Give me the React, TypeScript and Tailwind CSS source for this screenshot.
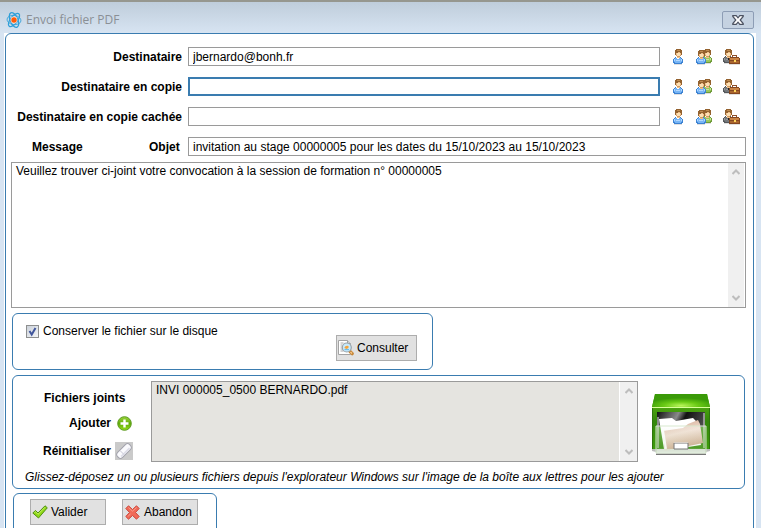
import clsx from "clsx";

interface IconProps {
  className?: string;
}

const AtomIcon: React.FC<IconProps> = ({ className }) => (
  <svg viewBox="0 0 16 16" className={className} fill="none">
    <g stroke="#2f9fd8" strokeWidth="1.3">
      <ellipse cx="8" cy="8" rx="7.8" ry="3.8" transform="rotate(66 8 8)" />
      <ellipse cx="8" cy="8" rx="7.8" ry="3.6" transform="rotate(-52 8 8)" />
      <ellipse cx="8" cy="8" rx="7" ry="4.6" transform="rotate(8 8 8)" strokeWidth="0.8" />
    </g>
    <circle cx="8" cy="8" r="3.4" fill="#fbe3d6" />
    <circle cx="8" cy="8" r="2.7" fill="#ff5a0a" />
  </svg>
);

const Head: React.FC<{ x: number; y: number }> = ({ x, y }) => (
  <g transform={`translate(${x} ${y})`}>
    <path d="M1 2h5v5H5v2H2V7H1z" fill="#f0c08a" />
    <path d="M2 4h3v3H2z" fill="#fde0b4" />
    <path d="M1 0h5v1h1v5H6V4H5V3H3v1H1v2H0V1h1z" fill="#94622f" />
    <path d="M2 1h3v1H2z" fill="#c08c50" />
    <path d="M1 6h1v1H1zM5 6h1v1H5zM2 7h3v1H2z" fill="#d09a62" />
  </g>
);

interface BodyProps {
  x: number;
  y: number;
  edge: string;
  fill: string;
  light: string;
}

const Body: React.FC<BodyProps> = ({ x, y, edge, fill, light }) => (
  <g transform={`translate(${x} ${y})`}>
    <path d="M2 0h6v1h1v1h1v4H9v1H1V6H0V2h1V1h1z" fill={edge} />
    <path d="M2 1h6v1h1v3H8v1H2V5H1V2h1z" fill={fill} />
    <path d="M1 2h1v2H1zM8 2h1v2H8zM3 3h4v1H3z" fill={light} />
    <path d="M3 0h4v1H6v1H4V1H3z" fill="#fff" />
    <path d="M1 7h8v1H1z" fill="#000" opacity="0.12" />
  </g>
);

const UserIcon: React.FC<IconProps> = ({ className }) => (
  <svg viewBox="0 0 12 16" className={className} shapeRendering="crispEdges">
    <Body x={1} y={8} edge="#3c82d2" fill="#78b5f5" light="#b3d9ff" />
    <Head x={3} y={0} />
  </svg>
);

const UsersIcon: React.FC<IconProps> = ({ className }) => (
  <svg viewBox="0 0 17 16" className={className} shapeRendering="crispEdges">
    <Body x={6} y={7} edge="#6f9c38" fill="#9cc75c" light="#cbe79a" />
    <Head x={8} y={0} />
    <Body x={0} y={8} edge="#3c82d2" fill="#78b5f5" light="#b3d9ff" />
    <Head x={2} y={1} />
  </svg>
);

const ContactIcon: React.FC<IconProps> = ({ className }) => (
  <svg viewBox="0 0 17 16" className={className} shapeRendering="crispEdges">
    <Body x={0} y={7} edge="#55585b" fill="#75787b" light="#96999c" />
    <path d="M5 8h1v3H5z" fill="#222" />
    <Head x={2} y={0} />
    <path d="M9 8V6h5v2h-1V7h-3v1z" fill="#8f5029" />
    <path d="M7 8h9v1h1v6H6V9h1z" fill="#84461f" />
    <path d="M7 9h9v2H7z" fill="#c98344" />
    <path d="M7 12h9v2H7z" fill="#a9652f" />
    <path d="M11 11h2v2h-2z" fill="#ffd65c" />
    <path d="M6 15h11v1H6z" fill="#000" opacity="0.12" />
  </svg>
);

const PreviewIcon: React.FC<IconProps> = ({ className }) => (
  <svg viewBox="0 0 16 16" className={className}>
    <path d="M.5.5h9l3 3v11H.5z" fill="#fff" stroke="#a3a3a3" />
    <path d="M9.500.5v3h3" fill="#ddd" stroke="#a3a3a3" />
    <path d="M2.500 3h3M2.500 5h2M2.500 7h2M2.500 9h2M2.500 11h3" stroke="#aaa" />
    <path d="m12 11.500 2.200 2.200" stroke="#c58434" strokeWidth="3.200" strokeLinecap="round" />
    <path d="m12.500 12 1.500 1.500" stroke="#f8c98a" strokeWidth="1.400" />
    <circle cx="8.800" cy="7.500" r="4.500" fill="#c6eafc" stroke="#98a1a8" strokeWidth="1.200" />
    <path d="M6.300 8q1-3 4.200-2v2l-2 1z" fill="#f5a33a" />
    <path d="M6.500 9h4.500v1.200H6.500z" fill="#6cbfee" />
  </svg>
);

const AddIcon: React.FC<IconProps> = ({ className }) => (
  <svg viewBox="0 0 15 15" className={className}>
    <defs>
      <linearGradient id="add" x2="0" y2="1">
        <stop stopColor="#9bd43a" />
        <stop offset="0.5" stopColor="#62ad08" />
        <stop offset="1" stopColor="#93dc1b" />
      </linearGradient>
    </defs>
    <circle cx="7.500" cy="7.500" r="6.800" fill="url(#add)" stroke="#5c9a22" />
    <path d="M7.500 3.500v8M3.500 7.500h8" stroke="#fff" strokeWidth="2.400" />
  </svg>
);

const EraserIcon: React.FC<IconProps> = ({ className }) => (
  <svg viewBox="0 0 18 18" className={className}>
    <g transform="rotate(-45 9 9)">
      <rect x="0.500" y="5.500" width="17" height="7" rx="3" fill="#fafafd" stroke="#a3a3ad" />
      <path d="M3 10.800h12" stroke="#dcdce8" strokeWidth="1.600" />
      <path d="M6.500 6v6" stroke="#d3d3df" />
    </g>
  </svg>
);

const CheckIcon: React.FC<IconProps> = ({ className }) => (
  <svg viewBox="0 0 16 14" className={className}>
    <path
      d="m.8 8 2.700-2.500L6 8l7-7.200 2.300 2L6.500 13z"
      fill="#8fd816"
      stroke="#4f8f14"
      strokeLinejoin="round"
    />
    <path d="m2.500 7.500 1-.8L6 9.300l7-7" fill="none" stroke="#c5f16a" />
  </svg>
);

const CrossIcon: React.FC<IconProps> = ({ className }) => (
  <svg viewBox="0 0 15 15" className={className}>
    <path
      d="M3.500.8 7.500 4.500l4-3.700 2.700 2.700-3.700 4 3.700 4-2.700 2.700-4-3.700-4 3.700L.8 11.500l3.700-4-3.700-4z"
      fill="#f06a58"
      stroke="#cc4a3e"
      strokeLinejoin="round"
    />
    <path d="m3.500 2.500 4 3.700 4-3.700M3 11.500l2.500-2.800" fill="none" stroke="#fa9d8a" />
  </svg>
);

const MailboxIcon: React.FC<IconProps> = ({ className }) => (
  <svg viewBox="0 0 60 64" className={className}>
    <defs>
      <radialGradient id="lid" cx="0.5" cy="0.9" r="0.6">
        <stop stopColor="#b9f55b" />
        <stop offset="0.5" stopColor="#69c914" />
        <stop offset="1" stopColor="#3a9a08" />
      </radialGradient>
      <linearGradient id="body" x2="0" y2="1">
        <stop stopColor="#62bd14" />
        <stop offset="0.5" stopColor="#34870b" />
        <stop offset="1" stopColor="#3d9c0b" />
      </linearGradient>
      <linearGradient id="inside" x2="1" y2="0.4">
        <stop stopColor="#111" />
        <stop offset="0.4" stopColor="#8a8a8a" />
        <stop offset="0.55" stopColor="#111" />
        <stop offset="1" stopColor="#555" />
      </linearGradient>
      <linearGradient id="folder" x2="0.3" y2="1">
        <stop stopColor="#cda085" />
        <stop offset="0.5" stopColor="#f0dccf" />
        <stop offset="1" stopColor="#cfa98e" />
      </linearGradient>
      <linearGradient id="front" x2="0" y2="1">
        <stop stopColor="#fff" stopOpacity="0.3" />
        <stop offset="0.8" stopColor="#b9d7aa" stopOpacity="0.15" />
        <stop offset="1" stopColor="#dfeeda" stopOpacity="0.8" />
      </linearGradient>
    </defs>
    <path d="M1 55h58v3l-4 1v3H5v-3l-4-1z" fill="#555" opacity="0.4" />
    <path d="M4 1h52l3 13v42H1V14z" fill="url(#body)" />
    <path d="M4 1h52l3 13H1z" fill="url(#lid)" />
    <path d="M1 14.500h58" stroke="#d9ff99" strokeWidth="1.200" />
    <path d="M1.500 15v41M58.500 15v41" stroke="#2f750d" />
    <path d="M6 19h48v37H6z" fill="url(#inside)" />
    <path d="M6 34h48v22H6z" fill="#3e9212" />
    <path d="M7 24v31M53 20v35" stroke="#e5e5e5" />
    <path d="m8 26 13-1 4 3 17-3 3 3 5 24-32 5-5-1z" fill="#fff" />
    <path d="m12 38 20-3 5-4 10-4 2 4 3 19-38 8z" fill="url(#folder)" />
    <path d="m12 37 3 19" stroke="#fff" strokeWidth="2" />
    <path d="M5 33h50v27H5z" fill="url(#front)" stroke="#d7e8ce" />
    <path d="M6 56h48v4H6z" fill="#e7efe4" opacity="0.65" />
    <path d="M5 61.500h50" stroke="#777" />
    <path d="M23 50h14v6H23z" fill="#fff" stroke="#777" />
    <path d="M23 49.500h14" stroke="#d8d0c8" />
  </svg>
);

const Chevron: React.FC<{ down?: boolean }> = ({ down }) => (
  <svg viewBox="0 0 8 6" className="h-1.5 w-2" fill="none">
    <path
      d={down ? "M.5 1 4 4.500 7.500 1" : "M.5 5 4 1.500 7.500 5"}
      stroke="#bdbdbd"
      strokeWidth="2"
    />
  </svg>
);

const ScrollBar: React.FC<IconProps> = ({ className }) => (
  <div
    className={clsx(
      "flex shrink-0 flex-col items-center justify-between bg-[#f0f0f0] py-1.5",
      className
    )}
  >
    <Chevron />
    <Chevron down />
  </div>
);

const recipients = [
  { id: "to", label: "Destinataire", value: "jbernardo@bonh.fr" },
  { id: "cc", label: "Destinataire en copie", value: "" },
  { id: "bcc", label: "Destinataire en copie cachée", value: "" },
];

const panel = "rounded-md border border-[#3a7cb0]";
const actionButton =
  "flex h-[26px] items-center border border-[#adadad] bg-[#e1e1e1]";

export default function App() {
  return (
    <div className="flex h-screen flex-col overflow-hidden border-t-2 border-[#96978f] bg-[#d7e4f2] font-['Liberation_Sans',Arial,sans-serif] text-xs text-black">
      <header className="flex h-[31px] shrink-0 items-center justify-between bg-linear-to-b from-[#bfcddb] to-[#d7e4f2] pt-1 pr-[7px] pl-1.5">
        <div className="flex items-center gap-1">
          <AtomIcon className="size-4" />
          <h1 className="font-['Open_Sans',sans-serif] text-xs text-[#8a8f95]">
            Envoi fichier PDF
          </h1>
        </div>
        <button
          type="button"
          aria-label="Fermer"
          className="flex h-[18px] w-8 items-center justify-center rounded-xs border border-[#8d9db5] bg-[#c5d2e1]"
        >
          <svg viewBox="0 0 12 10" className="h-2.5 w-3">
            <path
              d="M.8.700h3.400L6 2.800 7.800.700h3.400v.8L8.200 5l3 3.500v.8H7.800L6 7.200 4.200 9.300H.8v-.8L3.800 5l-3-3.500z"
              fill="#fff"
              stroke="#4c5261"
              strokeWidth="1.200"
            />
          </svg>
        </button>
      </header>

      <main className="mr-[5px] ml-1 grow bg-white pr-0.5 pl-px">
        <form className="h-full min-h-[520px] rounded-t-md border border-[#3a7cb0] pr-[7px] pl-[5px]">
          <div className="flex flex-col gap-[11px] pt-[13px]">
            {recipients.map(({ id, label, value }) => (
              <div key={id} className="flex h-[19px] items-center">
                <label htmlFor={id} className="w-[171px] text-right font-bold">
                  {label}
                </label>
                <input
                  id={id}
                  defaultValue={value}
                  className={clsx(
                    "ml-1.5 h-[19px] min-w-0 grow bg-white px-1 outline-none",
                    id === "cc"
                      ? "border-2 border-[#3a7cb0]"
                      : "border border-[#9a9a9a]"
                  )}
                />
                <div className="flex w-[86px] shrink-0 items-center gap-3 pl-3">
                  <button type="button" aria-label="Choisir un contact">
                    <UserIcon className="h-4 w-3" />
                  </button>
                  <button type="button" aria-label="Choisir un groupe">
                    <UsersIcon className="h-4 w-[17px]" />
                  </button>
                  <button type="button" aria-label="Choisir une société" className="-ml-0.5">
                    <ContactIcon className="h-4 w-[17px]" />
                  </button>
                </div>
              </div>
            ))}
            <div className="flex h-[19px] items-center">
              <label htmlFor="message" className="w-[138px] pl-[21px] font-bold">
                Message
              </label>
              <label htmlFor="subject" className="w-[39px] font-bold">
                Objet
              </label>
              <input
                id="subject"
                defaultValue="invitation au stage 00000005 pour les dates du 15/10/2023 au 15/10/2023"
                className="h-[19px] min-w-0 grow border border-[#9a9a9a] px-1 outline-none"
              />
            </div>
          </div>

          <div className="mt-1.5 flex h-[146px] border border-[#9a9a9a] pr-px">
            <textarea
              id="message"
              defaultValue="Veuillez trouver ci-joint votre convocation à la session de formation n° 00000005"
              className="grow resize-none px-1 outline-none"
            />
            <ScrollBar className="w-4" />
          </div>

          <section
            className={clsx(panel, "mt-[5px] ml-px flex h-[57px] w-[421px] justify-between pr-[15px] pl-[13px]")}
          >
            <div className="flex h-[34px] items-center gap-1">
              <span className="relative flex">
                <input
                  id="keep"
                  type="checkbox"
                  defaultChecked
                  className="peer size-[13px] appearance-none border border-[#8e8f8f] bg-linear-to-br from-[#ccd2da] to-[#f4f5f7]"
                />
                <svg
                  viewBox="0 0 13 13"
                  className="pointer-events-none absolute inset-0 hidden size-[13px] peer-checked:block"
                >
                  <path d="m3.500 6 2.200 3.500L9.500 3" fill="none" stroke="#41569c" strokeWidth="2" />
                </svg>
              </span>
              <label htmlFor="keep">Conserver le fichier sur le disque</label>
            </div>
            <button type="button" className={clsx(actionButton, "mt-[21px] w-[81px] gap-[3px] pl-px")}>
              <PreviewIcon className="size-4" />
              Consulter
            </button>
          </section>

          <section className={clsx(panel, "mt-[5px] mr-px ml-px h-[114px] pt-[5px]")}>
            <div className="flex">
              <div className="flex w-[138px] shrink-0 flex-col pt-1 font-bold">
                <label htmlFor="files" className="flex h-[26px] items-center pl-[31px]">
                  Fichiers joints
                </label>
                <button type="button" className="flex h-6 items-center justify-end gap-1.5 pr-[19px]">
                  Ajouter
                  <AddIcon className="size-[15px]" />
                </button>
                <button type="button" className="mt-1 flex h-6 items-center justify-end gap-1 pr-[18px]">
                  Réinitialiser
                  <span className="bg-[#cacaca]">
                    <EraserIcon className="size-[18px]" />
                  </span>
                </button>
              </div>
              <div className="flex h-[81px] grow border border-[#9a9a9a] bg-[#e5e4e0]">
                <textarea
                  id="files"
                  readOnly
                  defaultValue="INVI 000005_0500 BERNARDO.pdf"
                  className="grow resize-none px-1 outline-none"
                />
                <div className="flex border-l border-white">
                  <ScrollBar className="w-[17px]" />
                </div>
              </div>
              <div className="flex w-[106px] shrink-0 pt-3 pl-[13px]">
                <MailboxIcon className="h-16 w-[60px]" />
              </div>
            </div>
            <p className="mt-1.5 pl-3 italic">
              Glissez-déposez un ou plusieurs fichiers depuis l'explorateur Windows sur l'image de la boîte aux lettres pour les ajouter
            </p>
          </section>

          <section className={clsx(panel, "mt-1 ml-0.5 flex h-[50px] w-[204px] gap-4 pt-[5px] pl-4")}>
            <button type="submit" className={clsx(actionButton, "w-[76px] gap-[3px] pl-px")}>
              <CheckIcon className="h-3.5 w-4" />
              Valider
            </button>
            <button type="button" className={clsx(actionButton, "w-[76px] gap-1 pl-0.5")}>
              <CrossIcon className="size-[15px]" />
              Abandon
            </button>
          </section>
        </form>
      </main>
    </div>
  );
}
